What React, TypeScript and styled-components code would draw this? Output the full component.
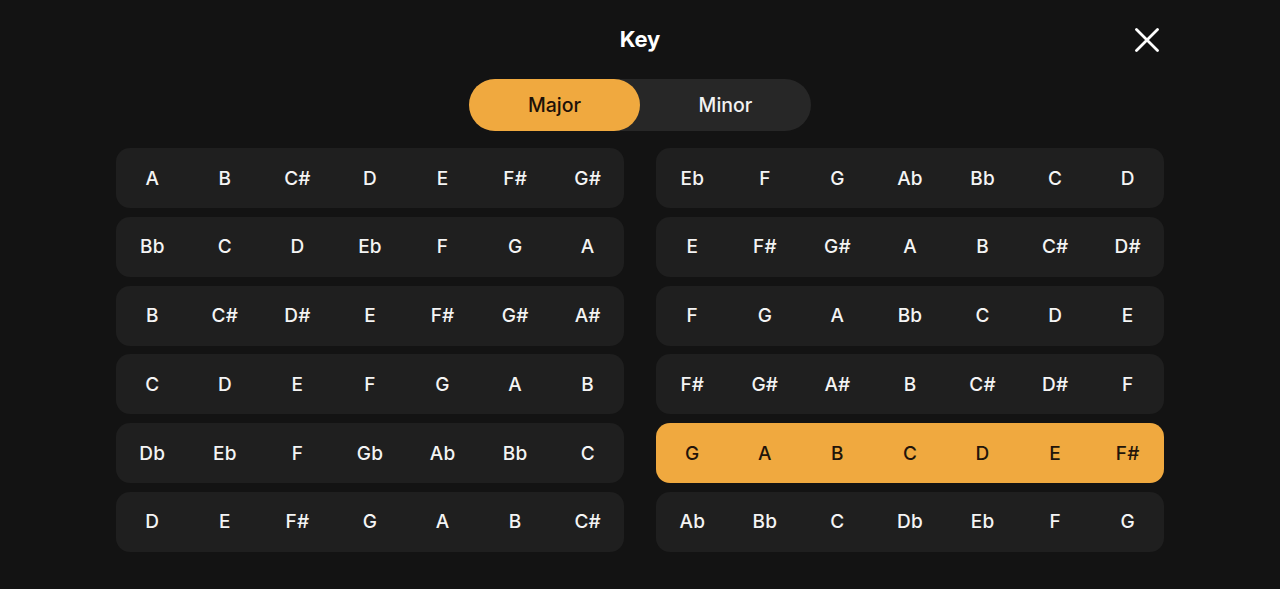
import React, { useState } from 'react';
import styled, { createGlobalStyle } from 'styled-components';

const GlobalStyle = createGlobalStyle`
    html, body {
        margin: 0;
        padding: 0;
        background: #131313;
    }
    body {
        font-family: Inter, "Noto Sans", "Liberation Sans", sans-serif;
        -webkit-font-smoothing: antialiased;
    }
`;

// 장조 / 단조 키 표
const MAJOR_LEFT = [
    ['A', 'B', 'C#', 'D', 'E', 'F#', 'G#'],
    ['Bb', 'C', 'D', 'Eb', 'F', 'G', 'A'],
    ['B', 'C#', 'D#', 'E', 'F#', 'G#', 'A#'],
    ['C', 'D', 'E', 'F', 'G', 'A', 'B'],
    ['Db', 'Eb', 'F', 'Gb', 'Ab', 'Bb', 'C'],
    ['D', 'E', 'F#', 'G', 'A', 'B', 'C#'],
];

const MAJOR_RIGHT = [
    ['Eb', 'F', 'G', 'Ab', 'Bb', 'C', 'D'],
    ['E', 'F#', 'G#', 'A', 'B', 'C#', 'D#'],
    ['F', 'G', 'A', 'Bb', 'C', 'D', 'E'],
    ['F#', 'G#', 'A#', 'B', 'C#', 'D#', 'F'],
    ['G', 'A', 'B', 'C', 'D', 'E', 'F#'],
    ['Ab', 'Bb', 'C', 'Db', 'Eb', 'F', 'G'],
];

const Page = styled.div`
    width: 1280px;
    height: 589px;
    background: #131313;
    color: #ffffff;
    box-sizing: border-box;
    padding: 0 116px;
    display: flex;
    flex-direction: column;
`;

const Header = styled.div`
    height: 79px;
    display: grid;
    grid-template-columns: 1fr auto 1fr;
    align-items: center;
`;

const Title = styled.h1`
    grid-column: 2;
    margin: 0;
    font-size: 22px;
    font-weight: 700;
    letter-spacing: -0.2px;
    padding-bottom: 2px;
`;

const CloseButton = styled.button`
    grid-column: 3;
    justify-self: end;
    width: 28px;
    height: 28px;
    margin-right: 3px;
    padding: 0;
    border: none;
    background: transparent;
    display: flex;
    align-items: center;
    justify-content: center;
    cursor: pointer;
`;

const Segmented = styled.div`
    align-self: center;
    width: 342px;
    height: 52px;
    border-radius: 26px;
    background: #272727;
    display: grid;
    grid-template-columns: 1fr 1fr;
`;

const Segment = styled.button<{ $active: boolean }>`
    border: none;
    border-radius: 26px;
    font-family: inherit;
    font-size: 19.5px;
    font-weight: 500;
    background: ${({ $active }) => ($active ? '#F0A93F' : 'transparent')};
    color: ${({ $active }) => ($active ? '#1c1108' : '#f2f2f2')};
    cursor: pointer;
`;

const Panels = styled.div`
    margin-top: 17px;
    display: grid;
    grid-template-columns: 1fr 1fr;
    column-gap: 32px;
`;

const Column = styled.div`
    display: flex;
    flex-direction: column;
    gap: 8.8px;
`;

const KeyRow = styled.div<{ $selected: boolean }>`
    height: 60px;
    border-radius: 14px;
    background: ${({ $selected }) => ($selected ? '#F0A93F' : '#1f1f1f')};
    color: ${({ $selected }) => ($selected ? '#22140a' : '#f4f4f4')};
    display: grid;
    grid-template-columns: repeat(7, 1fr);
    align-items: center;
    cursor: pointer;
`;

const Note = styled.span`
    text-align: center;
    font-size: 19px;
    font-weight: 500;
    letter-spacing: 0.2px;
`;

const App: React.FC = () => {
    const [mode, setMode] = useState<'major' | 'minor'>('major');
    const [selected, setSelected] = useState('R4');

    const renderColumn = (rows: string[][], side: string) => (
        <Column>
            {rows.map((notes, idx) => {
                const id = side + idx;
                return (
                    <KeyRow key={id} $selected={selected === id} onClick={() => setSelected(id)}>
                        {notes.map((n, i) => (
                            <Note key={i}>{n}</Note>
                        ))}
                    </KeyRow>
                );
            })}
        </Column>
    );

    return (
        <>
            <GlobalStyle />
            <Page>
                <Header>
                    <Title>Key</Title>
                    <CloseButton aria-label="close">
                        <svg width="24" height="24" viewBox="0 0 24 24">
                            <path d="M1.5 1.5 L22.5 22.5 M22.5 1.5 L1.5 22.5" stroke="#ffffff" strokeWidth="2.8" strokeLinecap="round" />
                        </svg>
                    </CloseButton>
                </Header>

                <Segmented>
                    <Segment $active={mode === 'major'} onClick={() => setMode('major')}>Major</Segment>
                    <Segment $active={mode === 'minor'} onClick={() => setMode('minor')}>Minor</Segment>
                </Segmented>

                <Panels>
                    {renderColumn(MAJOR_LEFT, 'L')}
                    {renderColumn(MAJOR_RIGHT, 'R')}
                </Panels>
            </Page>
        </>
    );
};

export default App;
